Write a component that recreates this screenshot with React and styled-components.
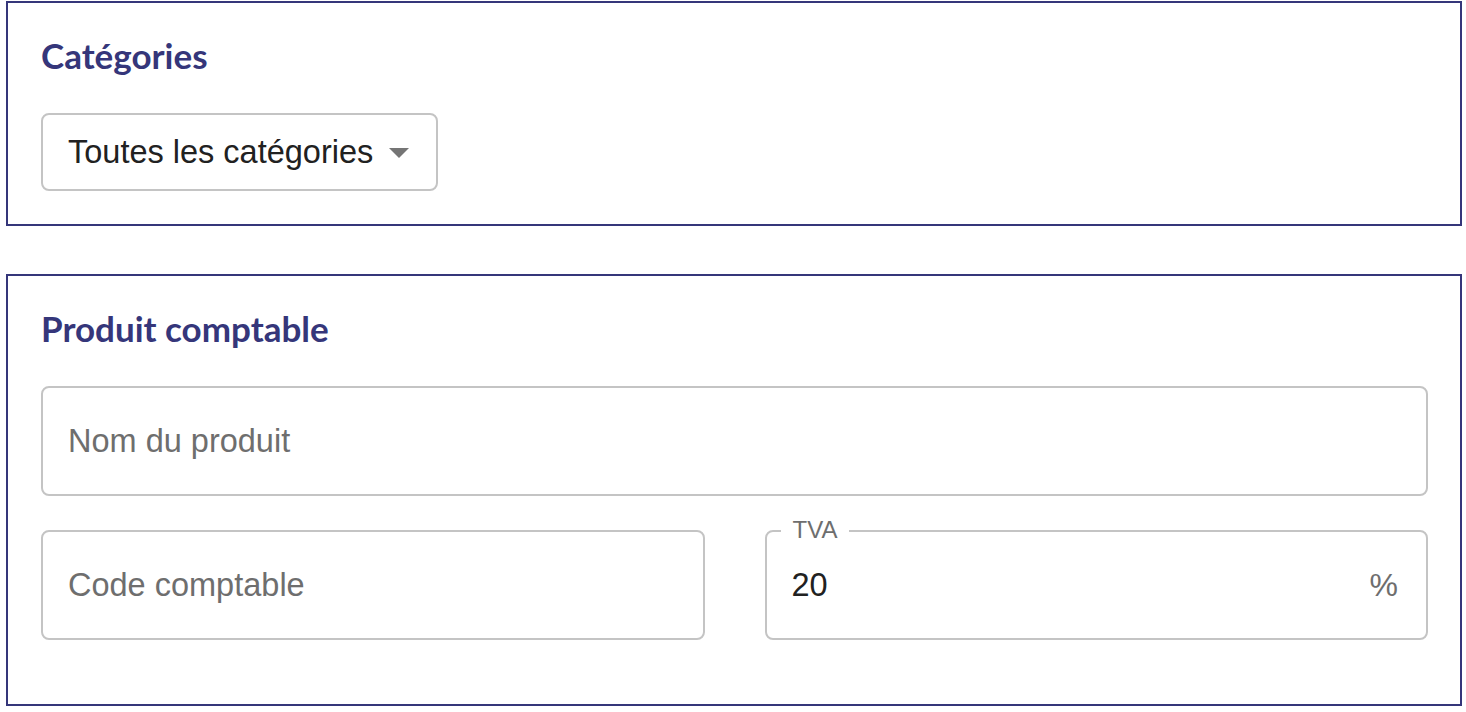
import React from 'react'
import styled, { createGlobalStyle } from 'styled-components'

const navy = '#35367a'
const outline = '#c4c4c4'

const GlobalStyle = createGlobalStyle`
  body {
    margin: 0;
    background: #fff;
    font-family: "Liberation Sans", Arial, sans-serif;
  }
`

const Page = styled.div`
  display: flex;
  flex-direction: column;
  gap: 48px;
  padding: 1px 4px 0 6px;
`

const Section = styled.section`
  border: 2px solid ${navy};
  padding: 32px 32px ${props => props.bottom}px 33px;
`

const Title = styled.h2`
  margin: 0 0 38px;
  font-family: Lato, "Open Sans", sans-serif;
  font-weight: 700;
  font-size: 35px;
  line-height: 40px;
  color: ${navy};
`

const Select = styled.div`
  display: flex;
  align-items: center;
  justify-content: space-between;
  box-sizing: border-box;
  width: 397px;
  height: 78px;
  padding: 0 13px 0 25px;
  border: 2px solid ${outline};
  border-radius: 8px;
  font-size: 32.5px;
  color: #212121;
  cursor: pointer;
`

const Rows = styled.div`
  display: flex;
  flex-direction: column;
  gap: 34px;
`

const Columns = styled.div`
  display: grid;
  grid-template-columns: 1fr 1fr;
  gap: 60px;
`

const Field = styled.label`
  position: relative;
  display: flex;
  align-items: center;
  box-sizing: border-box;
  height: 110px;
  padding: 0 28px 0 25px;
  border: 2px solid ${outline};
  border-radius: 8px;
`

const Input = styled.input`
  flex: 1;
  min-width: 0;
  border: 0;
  outline: 0;
  padding: 0;
  background: transparent;
  font-family: "Liberation Sans", Arial, sans-serif;
  font-size: 32.5px;
  color: #212121;
  &::placeholder {
    color: #6e6e6e;
    opacity: 1;
  }
`

const FloatingLabel = styled.span`
  position: absolute;
  left: 14px;
  top: -16px;
  padding: 0 12px;
  background: #fff;
  font-size: 24px;
  line-height: 28px;
  color: #6e6e6e;
`

const Adornment = styled.span`
  font-size: 32px;
  color: #6e6e6e;
`

const ArrowDropDown = () => (
  <svg width="48" height="48" viewBox="0 0 24 24" fill="#757575" aria-hidden="true">
    <path d="M7 10l5 5 5-5z" />
  </svg>
)

export default function App() {
  return (
    <>
      <GlobalStyle />
      <Page>
        <Section bottom={33}>
          <Title>Catégories</Title>
          <Select role="button">
            <span>Toutes les catégories</span>
            <ArrowDropDown />
          </Select>
        </Section>

        <Section bottom={64}>
          <Title>Produit comptable</Title>
          <Rows>
            <Field>
              <Input placeholder="Nom du produit" />
            </Field>
            <Columns>
              <Field>
                <Input placeholder="Code comptable" />
              </Field>
              <Field>
                <FloatingLabel>TVA</FloatingLabel>
                <Input defaultValue="20" />
                <Adornment>%</Adornment>
              </Field>
            </Columns>
          </Rows>
        </Section>
      </Page>
    </>
  )
}
